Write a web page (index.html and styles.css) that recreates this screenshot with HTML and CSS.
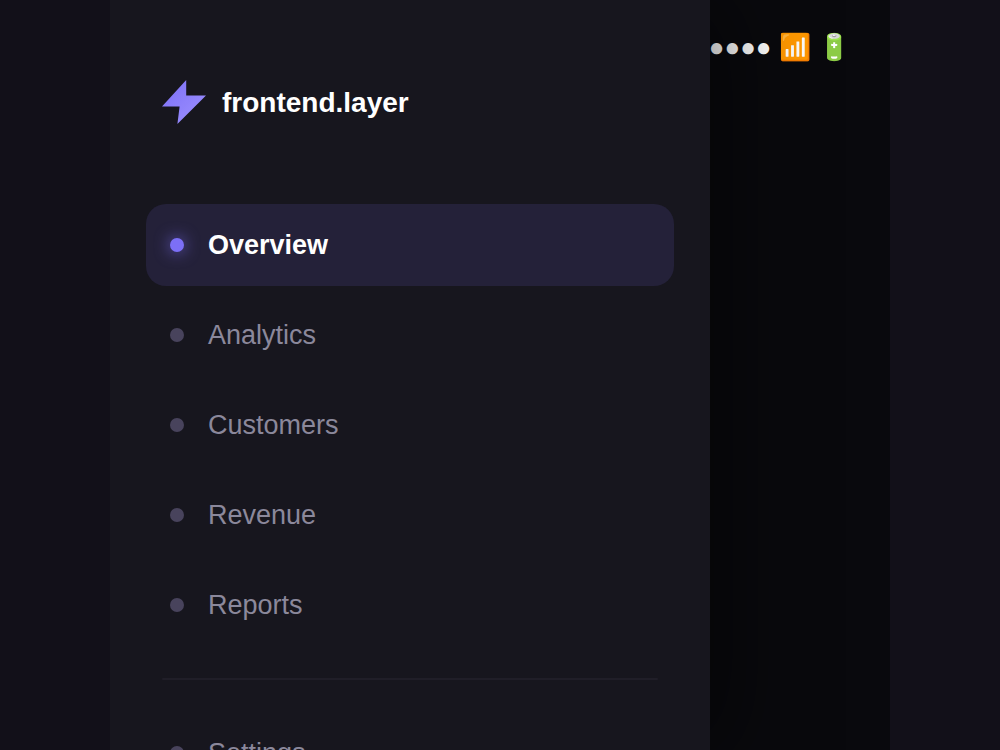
FILE: index.html
```html
<!DOCTYPE html>
<html lang="en">
<head>
  <meta charset="UTF-8">
  <meta name="viewport" content="width=device-width, initial-scale=1.0">
  <title>frontend.layer</title>
  <link rel="stylesheet" href="styles.css">
</head>
<body>
  <div class="phone">
    <header class="status-bar">
      <span class="status-icons">●●●● 📶 🔋</span>
    </header>

    <aside class="drawer">
      <div class="brand">
        <svg class="brand-logo" viewBox="0 0 44 44" aria-hidden="true">
          <defs>
            <linearGradient id="bolt" x1="0" y1="0" x2="1" y2="1">
              <stop offset="0" stop-color="#7c6ff7"/>
              <stop offset="1" stop-color="#9f92ff"/>
            </linearGradient>
          </defs>
          <polygon fill="url(#bolt)" points="24.2,0 24.2,15.4 44,15.4 15.4,44 17.6,26.4 0,26.4"/>
        </svg>
        <span class="brand-name">frontend.layer</span>
      </div>

      <nav class="nav">
        <a href="#overview" class="nav-item active"><span class="nav-dot"></span>Overview</a>
        <a href="#analytics" class="nav-item"><span class="nav-dot"></span>Analytics</a>
        <a href="#customers" class="nav-item"><span class="nav-dot"></span>Customers</a>
        <a href="#revenue" class="nav-item"><span class="nav-dot"></span>Revenue</a>
        <a href="#reports" class="nav-item"><span class="nav-dot"></span>Reports</a>
        <hr class="nav-divider">
        <a href="#settings" class="nav-item"><span class="nav-dot"></span>Settings</a>
      </nav>
    </aside>
  </div>
</body>
</html>
```
FILE: styles.css
```css
:root {
  --bg: #121019;
  --screen: #09090d;
  --drawer: #17161e;
  --active: #242139;
  --accent: #7c6ff7;
  --dot: #48435c;
  --text: #ffffff;
  --text-muted: #8b889b;
  --line: #201e28;
}

* {
  margin: 0;
  padding: 0;
  box-sizing: border-box;
}

body {
  background: var(--bg);
  color: var(--text);
  font-family: "Liberation Sans", Arial, sans-serif;
}

.phone {
  position: relative;
  max-width: 780px;
  height: 100vh;
  margin: 0 auto;
  background: var(--screen);
  overflow: hidden;
}

.status-bar {
  display: flex;
  justify-content: flex-end;
  padding: 32px 40px;
}

.status-icons {
  font-size: 26px;
  line-height: 30px;
}

.drawer {
  position: absolute;
  top: 0;
  bottom: 0;
  left: 0;
  width: 600px;
  max-width: 100%;
  padding: 80px 36px;
  background: var(--drawer);
  box-shadow: 16px 0 80px rgba(0, 0, 0, 0.5);
}

.brand {
  display: flex;
  align-items: center;
  gap: 16px;
  padding: 0 16px;
  margin-bottom: 80px;
}

.brand-logo {
  width: 44px;
  height: 44px;
}

.brand-name {
  font-size: 28px;
  font-weight: 700;
  line-height: 33px;
}

.nav {
  display: flex;
  flex-direction: column;
  gap: 8px;
}

.nav-item {
  display: flex;
  align-items: center;
  gap: 24px;
  padding: 24px;
  border-radius: 20px;
  font-size: 27px;
  line-height: 34px;
  color: var(--text-muted);
  text-decoration: none;
}

.nav-dot {
  width: 14px;
  height: 14px;
  border-radius: 50%;
  background: var(--dot);
}

.nav-item.active {
  background: var(--active);
  color: var(--text);
  font-weight: 700;
}

.nav-item.active .nav-dot {
  background: var(--accent);
  box-shadow: 0 0 16px rgba(124, 111, 247, 0.8);
}

.nav-divider {
  height: 2px;
  margin: 24px 16px;
  border: none;
  border-radius: 1px;
  background: var(--line);
}
```
